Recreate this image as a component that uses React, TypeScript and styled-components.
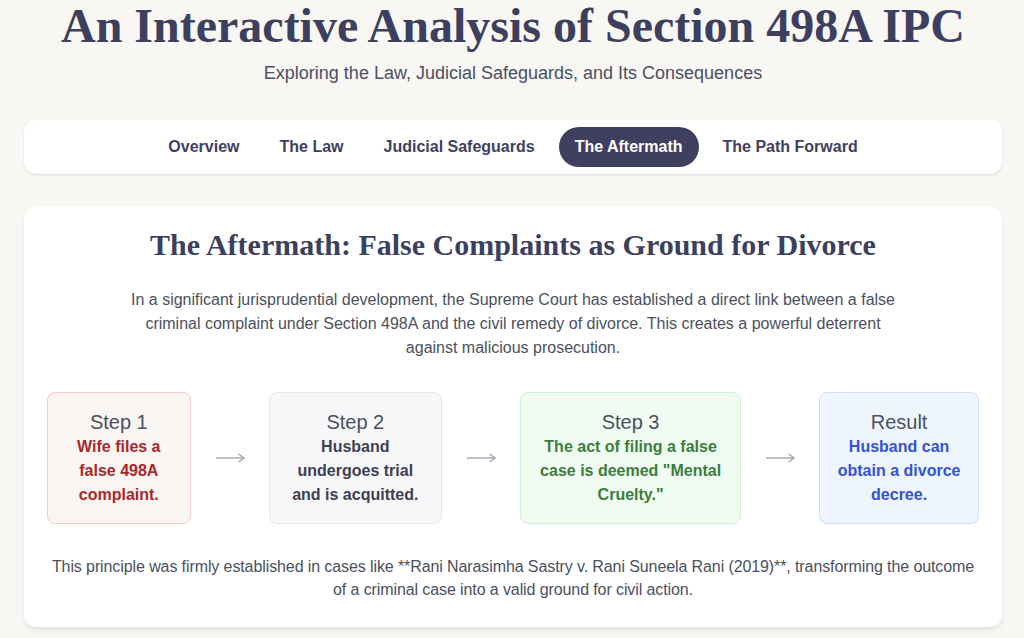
import React from 'react';
import styled, { createGlobalStyle } from 'styled-components';

const GlobalStyle = createGlobalStyle`
  html, body {
    margin: 0;
    padding: 0;
    background: #f8f7f4;
    font-family: "Liberation Sans", Arial, sans-serif;
    color: #3f3f5f;
  }
  * { box-sizing: border-box; }
`;

type Tone = 'red' | 'gray' | 'green' | 'blue';

const tones: Record<Tone, { bg: string; border: string; text: string }> = {
  red: { bg: '#f8f5f2', border: '#f3c9c9', text: '#a8282b' },
  gray: { bg: '#f6f7f9', border: '#e5e7eb', text: '#3f3f52' },
  green: { bg: '#f0fbf1', border: '#ccf2d4', text: '#3b7d3f' },
  blue: { bg: '#eff5fe', border: '#cfe0fb', text: '#3352d8' },
};

const tabs = ['Overview', 'The Law', 'Judicial Safeguards', 'The Aftermath', 'The Path Forward'];

const steps: { label: string; text: string; tone: Tone }[] = [
  { label: 'Step 1', text: 'Wife files a false 498A complaint.', tone: 'red' },
  { label: 'Step 2', text: 'Husband undergoes trial and is acquitted.', tone: 'gray' },
  { label: 'Step 3', text: 'The act of filing a false case is deemed "Mental Cruelty."', tone: 'green' },
  { label: 'Result', text: 'Husband can obtain a divorce decree.', tone: 'blue' },
];

const ArrowIcon: React.FC = () => (
  <svg width="30" height="12" viewBox="0 0 30 12" fill="none">
    <path d="M1 6 H28" stroke="#a3a7b0" strokeWidth="1.4" />
    <path d="M23.5 2 L29 6 L23.5 10" stroke="#a3a7b0" strokeWidth="1.4" strokeLinejoin="miter" />
  </svg>
);

const App: React.FC = () => {
  return (
    <>
      <GlobalStyle />
      <Page>
        <Header>
          <Title>An Interactive Analysis of Section 498A IPC</Title>
          <Subtitle>Exploring the Law, Judicial Safeguards, and Its Consequences</Subtitle>
        </Header>

        <Nav>
          {tabs.map((t) => (
            <Tab key={t} $active={t === 'The Aftermath'}>
              {t}
            </Tab>
          ))}
        </Nav>

        <Card>
          <Heading>The Aftermath: False Complaints as Ground for Divorce</Heading>
          <Lead>
            In a significant jurisprudential development, the Supreme Court has established a direct link
            between a false criminal complaint under Section 498A and the civil remedy of divorce. This
            creates a powerful deterrent against malicious prosecution.
          </Lead>

          <Flow>
            {steps.map((s, i) => (
              <React.Fragment key={s.label}>
                {i > 0 && (
                  <Arrow>
                    <ArrowIcon />
                  </Arrow>
                )}
                <StepBox $tone={s.tone}>
                  <StepLabel>{s.label}</StepLabel>
                  <StepText $tone={s.tone}>{s.text}</StepText>
                </StepBox>
              </React.Fragment>
            ))}
          </Flow>

          <Note>
            This principle was firmly established in cases like **Rani Narasimha Sastry v. Rani Suneela Rani
            (2019)**, transforming the outcome of a criminal case into a valid ground for civil action.
          </Note>
        </Card>
      </Page>
    </>
  );
};

const Page = styled.div`
  max-width: 1024px;
  margin: 0 auto;
  padding: 2px 22px 32px 24px;
`;

const Header = styled.header`
  text-align: center;
  margin-bottom: 33px;
`;

const Title = styled.h1`
  margin: 0 0 9px;
  font-family: "Liberation Serif", "Times New Roman", serif;
  font-size: 48px;
  line-height: 48px;
  font-weight: 700;
  color: #3d3f5e;
`;

const Subtitle = styled.p`
  margin: 0;
  font-size: 18px;
  line-height: 28px;
  color: #4b5060;
`;

const Nav = styled.nav`
  display: flex;
  justify-content: center;
  gap: 8px;
  padding: 7px;
  background: #fff;
  border-radius: 12px;
  box-shadow: 0 1px 3px rgba(0, 0, 0, 0.08), 0 1px 2px rgba(0, 0, 0, 0.04);
  margin-bottom: 33px;
`;

const Tab = styled.button<{ $active?: boolean }>`
  border: none;
  cursor: pointer;
  padding: 8px 16px;
  border-radius: 999px;
  font-family: inherit;
  font-size: 16px;
  line-height: 24px;
  font-weight: 700;
  background: ${(p) => (p.$active ? '#3f3f5f' : 'transparent')};
  color: ${(p) => (p.$active ? '#fff' : '#3f3f5f')};
`;

const Card = styled.section`
  background: #fff;
  border-radius: 12px;
  padding: 20px 23px 26px;
  box-shadow: 0 4px 6px -1px rgba(0, 0, 0, 0.08), 0 2px 4px -2px rgba(0, 0, 0, 0.05);
  text-align: center;
`;

const Heading = styled.h2`
  margin: 0 0 25px;
  font-family: "Liberation Serif", "Times New Roman", serif;
  font-size: 30px;
  line-height: 36px;
  font-weight: 700;
  color: #3d3f5e;
`;

const Lead = styled.p`
  max-width: 768px;
  margin: 0 auto;
  font-size: 16px;
  line-height: 24px;
  color: #4b5060;
`;

const Flow = styled.div`
  display: flex;
  align-items: center;
  justify-content: center;
  gap: 24px;
  margin-top: 32px;
`;

const Arrow = styled.div`
  display: flex;
  flex-shrink: 0;
  width: 30px;
`;

const StepBox = styled.div<{ $tone: Tone }>`
  padding: 16px;
  border-radius: 8px;
  border: 1px solid ${(p) => tones[p.$tone].border};
  background: ${(p) => tones[p.$tone].bg};
`;

const StepLabel = styled.div`
  font-size: 20px;
  line-height: 26px;
  color: #4b5060;
`;

const StepText = styled.div<{ $tone: Tone }>`
  font-size: 16px;
  line-height: 24px;
  font-weight: 700;
  color: ${(p) => tones[p.$tone].text};
`;

const Note = styled.p`
  margin: 31px 0 0;
  font-size: 16px;
  line-height: 23px;
  letter-spacing: -0.1px;
  color: #4b5060;
`;

export default App;
